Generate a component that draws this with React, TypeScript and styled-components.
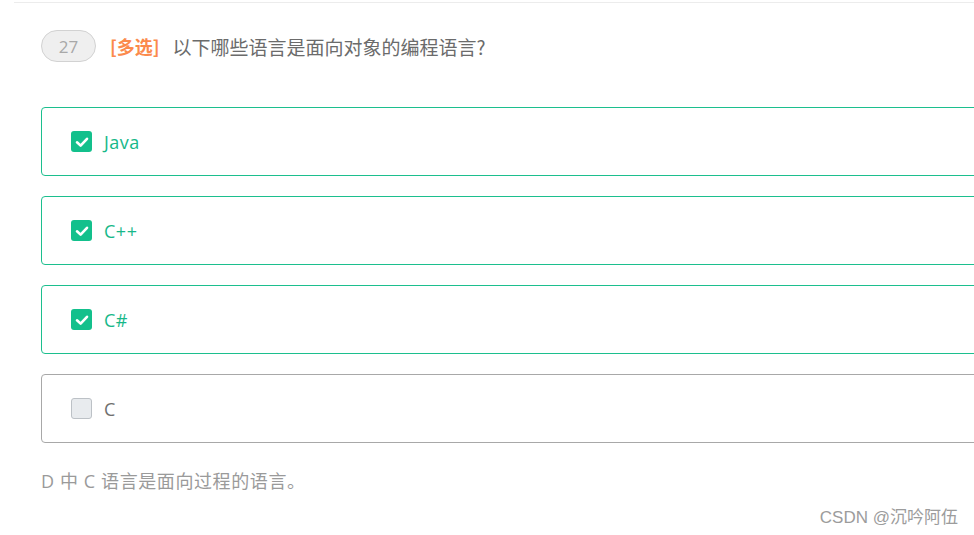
import React from "react";
import styled, { createGlobalStyle } from "styled-components";

const Global = createGlobalStyle`
  html, body { margin: 0; padding: 0; background: #fff; overflow: hidden; }
  body { font-family: "Open Sans", "Noto Sans CJK SC", sans-serif; }
`;

const Page = styled.div`
  width: 974px;
  height: 535px;
  position: relative;
  overflow: hidden;
  padding-top: 2px;
  box-sizing: border-box;
`;

const TopRule = styled.div`
  margin-left: 14px;
  height: 1px;
  background: #ececec;
`;

const Body = styled.div`
  padding-left: 41px;
`;

const QuestionRow = styled.div`
  display: flex;
  align-items: center;
  margin-top: 27px;
  height: 32px;
`;

const NumBadge = styled.div`
  width: 55px;
  height: 32px;
  box-sizing: border-box;
  border: 1px solid #d2d2d2;
  border-radius: 16px;
  background: #efefef;
  color: #a8a8a8;
  font-size: 17px;
  display: flex;
  align-items: center;
  justify-content: center;
`;

const Tag = styled.span`
  margin-left: 14px;
  color: #fb8a4c;
  font-weight: 700;
  font-size: 18px;
  font-family: "Noto Sans CJK SC", sans-serif;
`;

const Title = styled.span`
  margin-left: 13px;
  color: #6b6b6b;
  font-size: 19px;
  font-family: "Noto Sans CJK SC", sans-serif;
`;

const Options = styled.div`
  margin-top: 45px;
  display: flex;
  flex-direction: column;
  gap: 20px;
  margin-right: -20px;
`;

const OptionCard = styled.div<{ $checked: boolean }>`
  height: 69px;
  box-sizing: border-box;
  border: 1px solid ${(p) => (p.$checked ? "#1cbf8e" : "#a8a8a8")};
  border-radius: 4px;
  display: flex;
  align-items: center;
  padding-left: 29px;
`;

const Box = styled.div<{ $checked: boolean }>`
  width: 21px;
  height: 21px;
  box-sizing: border-box;
  border-radius: 3px;
  background: ${(p) => (p.$checked ? "#13c08c" : "#e8ebee")};
  border: ${(p) => (p.$checked ? "none" : "1px solid #bcc1c6")};
  display: flex;
  align-items: center;
  justify-content: center;
`;

const Label = styled.span<{ $checked: boolean }>`
  margin-left: 12px;
  font-size: 18px;
  letter-spacing: 0.5px;
  color: ${(p) => (p.$checked ? "#17b889" : "#6f6f6f")};
`;

const Explain = styled.div`
  margin-top: 24px;
  color: #9a9a9a;
  font-size: 18px;
  letter-spacing: 0.6px;
  font-family: "Open Sans", "Noto Sans CJK SC", sans-serif;
`;

const Watermark = styled.div`
  position: absolute;
  right: 16px;
  bottom: 7px;
  color: #9c9c9c;
  font-size: 17px;
  font-family: "Liberation Sans", "Noto Sans CJK SC", sans-serif;
`;

const Check = () => (
  <svg width="16" height="16" viewBox="0 0 16 16">
    <path d="M3 8.3 L6.6 11.6 L13 4.8" fill="none" stroke="#fff" strokeWidth="2.6" strokeLinecap="round" strokeLinejoin="round" />
  </svg>
);

const options = [
  { label: "Java", checked: true },
  { label: "C++", checked: true },
  { label: "C#", checked: true },
  { label: "C", checked: false },
];

export default function App() {
  return (
    <Page>
      <Global />
      <TopRule />
      <Body>
        <QuestionRow>
          <NumBadge>27</NumBadge>
          <Tag>[多选]</Tag>
          <Title>以下哪些语言是面向对象的编程语言?</Title>
        </QuestionRow>
        <Options>
          {options.map((o) => (
            <OptionCard key={o.label} $checked={o.checked}>
              <Box $checked={o.checked}>{o.checked && <Check />}</Box>
              <Label $checked={o.checked}>{o.label}</Label>
            </OptionCard>
          ))}
        </Options>
        <Explain>D 中 C 语言是面向过程的语言。</Explain>
      </Body>
      <Watermark>CSDN @沉吟阿伍</Watermark>
    </Page>
  );
}
